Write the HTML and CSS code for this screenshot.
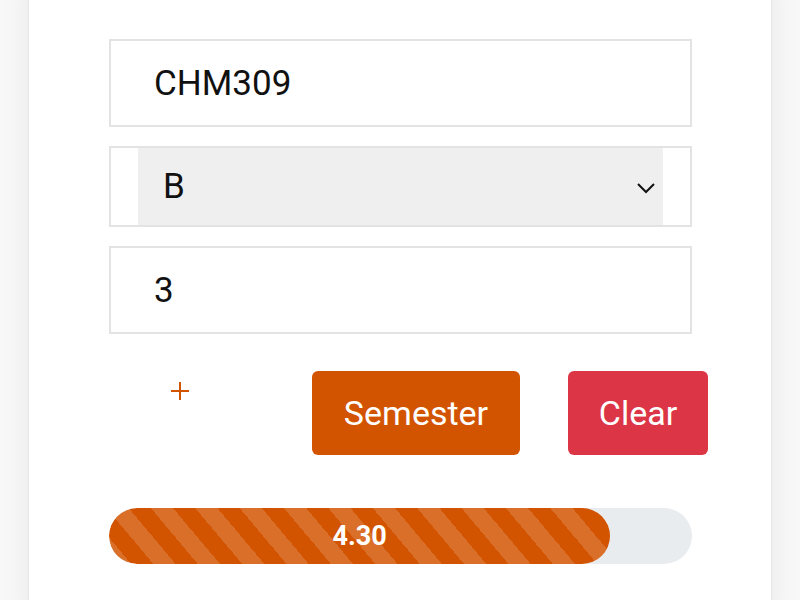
FILE: index.html
```html
<!DOCTYPE html>
<html>
<head>
<meta charset="utf-8">
<link rel="stylesheet" href="styles.css">
</head>
<body>
<div class="card">
  <div class="field">CHM309</div>
  <div class="select-wrap">
    <div class="select">
      <span>B</span>
      <svg class="chev" width="20" height="12" viewBox="0 0 20 12"><path d="M2 2 L10 10 L18 2" fill="none" stroke="#111" stroke-width="2"/></svg>
    </div>
  </div>
  <div class="field">3</div>
  <div class="actions">
    <button class="btn-add" aria-label="add"><svg width="20" height="20" viewBox="0 0 20 20"><path d="M10 1 V19 M1 10 H19" stroke="#d35400" stroke-width="2"/></svg></button>
    <button class="btn btn-sem">Semester</button>
    <button class="btn btn-clear">Clear</button>
  </div>
  <div class="progress">
    <div class="bar" style="width:86%">4.30</div>
  </div>
</div>
</body>
</html>
```
FILE: styles.css
```css
html, body {
  margin: 0;
  padding: 0;
  background: #f8f8f8;
  font-family: Roboto, "Liberation Sans", sans-serif;
  overflow: hidden;
  height: 600px;
}
.card {
  margin: -20px 28px 0;
  background: #fff;
  border: 1px solid #e4e6e9;
  box-shadow: 0 0 28px rgba(0,0,0,0.07);
  padding: 58px 79px 0 80px;
  height: 640px;
  box-sizing: border-box;
}
.field {
  height: 88px;
  border: 2px solid #e3e3e3;
  box-sizing: border-box;
  padding-left: 43px;
  font-size: 35px;
  color: #111;
  display: flex;
  align-items: center;
  margin-bottom: 19px;
}
.select-wrap {
  height: 81px;
  border: 2px solid #e3e3e3;
  box-sizing: border-box;
  padding: 0 27px;
  margin-bottom: 19px;
}
.select {
  height: 100%;
  background: #efefef;
  display: flex;
  align-items: center;
  justify-content: space-between;
  padding: 0 7px 0 25px;
  font-size: 35px;
  color: #111;
}
.chev { display: block; margin-top: 2px; }
.actions {
  display: flex;
  align-items: flex-start;
  margin-top: 37px;
  margin-right: -17px;
}
.btn-add {
  border: 0;
  background: transparent;
  padding: 0;
  margin: 10px 0 0 61px;
  width: 20px;
  height: 20px;
}
.btn-add svg { display: block; }
.btn {
  height: 84px;
  border: 0;
  border-radius: 6px;
  color: #fff;
  font-family: Roboto, "Liberation Sans", sans-serif;
  font-size: 34px;
  padding: 0;
}
.btn-sem {
  background: #d35400;
  width: 208px;
  margin-left: 122px;
}
.btn-clear {
  background: #dc3545;
  width: 140px;
  margin-left: 48px;
}
.progress {
  margin-top: 53px;
  height: 56px;
  background: #e9ecef;
  border-radius: 28px;
  overflow: hidden;
  display: flex;
}
.bar {
  height: 100%;
  border-radius: 28px;
  background-color: #d35400;
  background-image: repeating-linear-gradient(50deg, rgba(255,255,255,0.16) 0 17px, transparent 17px 34px);
  color: #fff;
  font-weight: 700;
  font-size: 27px;
  display: flex;
  align-items: center;
  justify-content: center;
}
```
